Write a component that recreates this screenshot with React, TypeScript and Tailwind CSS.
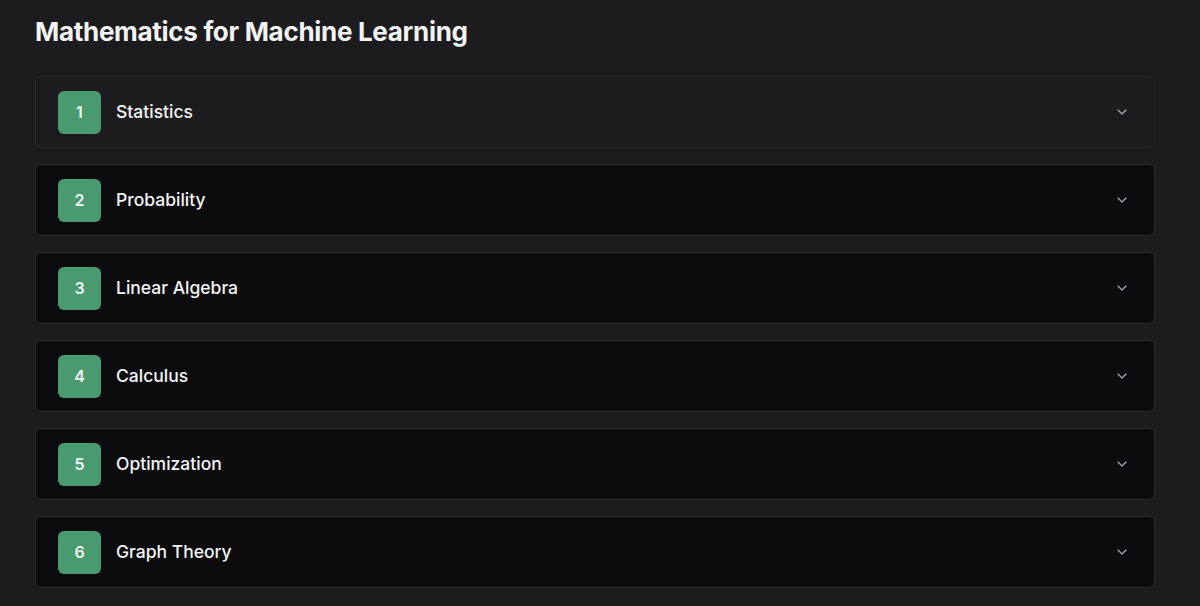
import { ChevronDown } from "lucide-react";

const topics = [
  "Statistics",
  "Probability",
  "Linear Algebra",
  "Calculus",
  "Optimization",
  "Graph Theory",
];

export default function App() {
  return (
    <div className="min-h-screen bg-[#1c1c1e] pl-[35px] pr-[45px] pt-[15px] pb-[18px] text-white font-['Inter',sans-serif]">
      <h1 className="text-[26px] leading-[34px] font-bold tracking-[-0.3px] text-[#f4f4f5]">
        Mathematics for Machine Learning
      </h1>
      <div className="mt-[27px] flex flex-col gap-4">
        {topics.map((t, i) => (
          <div
            key={t}
            className={
              i === 0
                ? "h-[72px] flex items-center pl-[22px] pr-[24px] rounded-md border border-[#27272a] bg-[#1c1c1e]"
                : "h-[72px] flex items-center pl-[22px] pr-[24px] rounded-md border border-[#2a2a2d] bg-[#0c0c0e]"
            }
          >
            <div className="w-[43px] h-[43px] rounded-md bg-[#4a9a70] flex items-center justify-center text-[16px] font-semibold text-[#f0f7f3]">
              {i + 1}
            </div>
            <span className="ml-[15px] text-[17.5px] font-medium text-[#f4f4f5]">{t}</span>
            <ChevronDown className="ml-auto w-4 h-4 text-[#a1a1aa]" strokeWidth={2} />
          </div>
        ))}
      </div>
    </div>
  );
}
